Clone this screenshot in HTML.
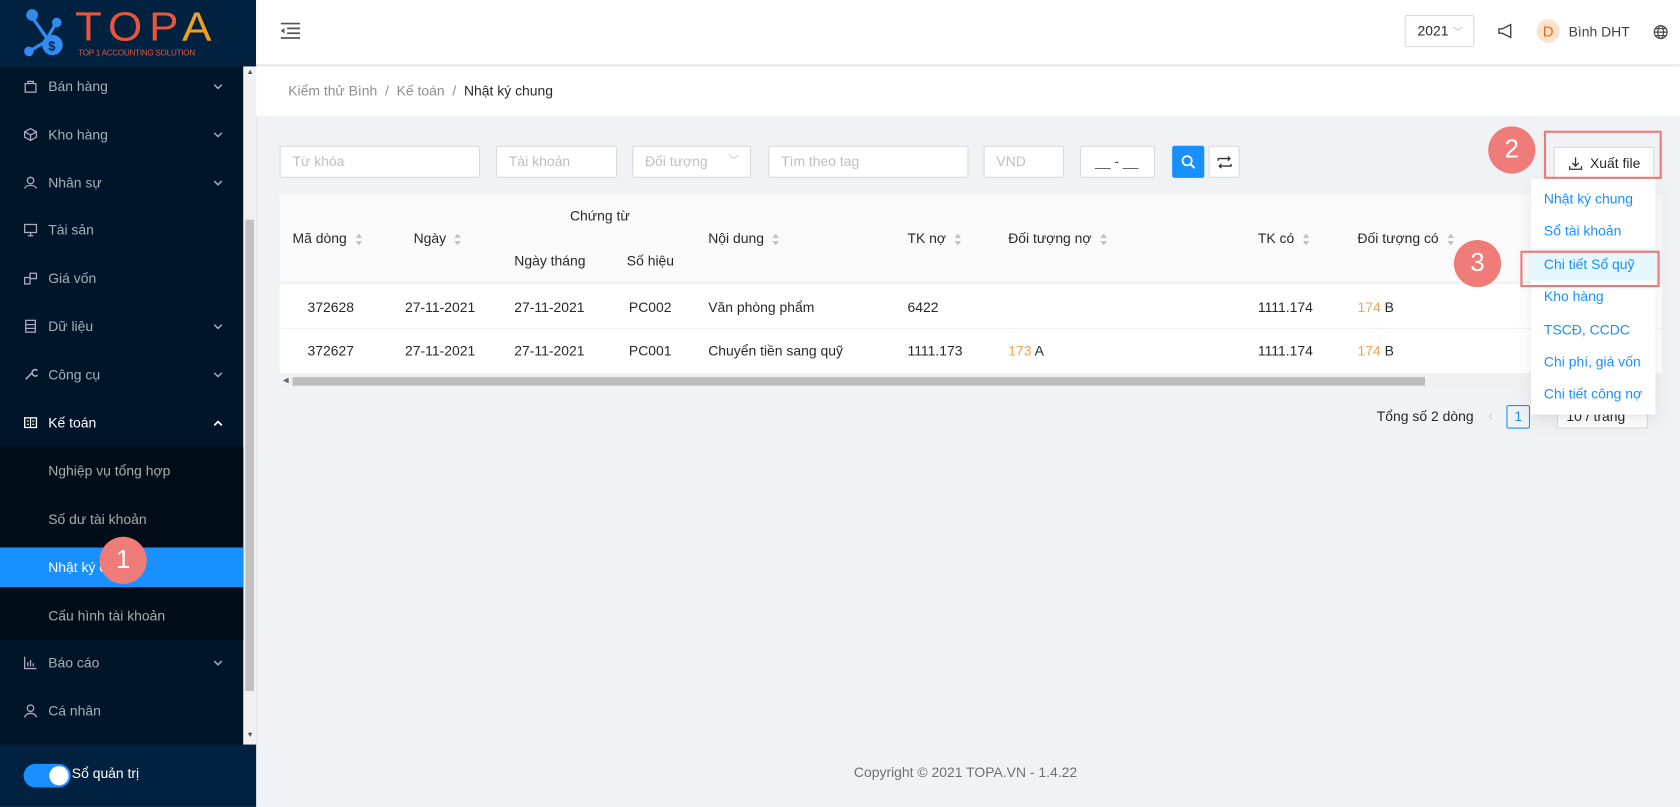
<!DOCTYPE html>
<html><head><meta charset="utf-8"><style>
*{box-sizing:border-box;margin:0;padding:0}
html,body{width:1680px;height:807px;overflow:hidden;background:#f0f2f5;font-family:"Liberation Sans",sans-serif}
#w{position:absolute;left:0;top:0;width:1568px;height:753px;transform:scale(1.07143);transform-origin:0 0;background:#f0f2f5;font-size:13px;color:rgba(0,0,0,.85)}
.a{position:absolute}
.side{left:0;top:0;width:239px;height:753px;background:#001529}
.logo{left:0;top:0;width:239px;height:62px;background:#002140}
.mi{position:absolute;left:0;width:227px;height:45px;line-height:45px;color:rgba(255,255,255,.65);font-size:13px}
.mi .t{position:absolute;left:45px}
.mi .ic{position:absolute;left:22px;top:16px;width:13px;height:13px}
.mi .cv{position:absolute;left:199px;top:20px;width:9px;height:6px}
.sub{left:0;top:417px;width:227px;height:180px;background:#000c17}
.inp{position:absolute;top:136px;height:30px;background:#fff;border:1px solid #d9d9d9;border-radius:2px;color:#bfbfbf;line-height:28px;padding-left:11px;font-size:13px}
.th{position:absolute;font-size:13px;color:rgba(0,0,0,.85)}
.sort{display:inline-block;margin-left:8px;vertical-align:middle;width:7px;height:11px;position:relative}
.sort:before{content:"";position:absolute;top:0;left:0;border:3.5px solid transparent;border-bottom:4px solid #bfbfbf;border-top:0}
.sort:after{content:"";position:absolute;bottom:0;left:0;border:3.5px solid transparent;border-top:4px solid #bfbfbf;border-bottom:0}
.td{position:absolute;font-size:13px;color:rgba(0,0,0,.85)}
.dd{position:absolute;left:12px;color:#1890ff;font-size:13px}
.circ{position:absolute;width:44px;height:44px;border-radius:50%;background:#ef7c79;color:#fff;font-size:24px;text-align:center;line-height:44px}
.org{color:#f0a35a}
</style></head><body><div id="w">
<div class="a side"></div>
<div class="a logo">
<svg class="a" style="left:22px;top:8px" width="48" height="48" viewBox="0 0 48 48"><g stroke="#2f8cf0" stroke-width="3" fill="#2f8cf0"><line x1="8" y1="8" x2="22" y2="28"/><line x1="30" y1="14" x2="22" y2="28"/><line x1="5" y1="40" x2="22" y2="30"/><circle cx="8" cy="6" r="4"/><circle cx="31" cy="13" r="3"/><circle cx="5" cy="40" r="3"/><circle cx="27" cy="34" r="8"/></g><text x="23" y="39" fill="#002140" font-size="12" font-weight="bold" font-family="Liberation Sans">$</text></svg>
<div class="a" style="left:70px;top:5px;font-size:38px;letter-spacing:6px;color:#e8553a;line-height:42px;transform:scaleX(1.08);transform-origin:0 0">TOP<span style="color:#f0a020">A</span></div>
<div class="a" style="left:73px;top:45px;font-size:7.5px;color:#e8553a;letter-spacing:-.2px">TOP 1 ACCOUNTING SOLUTION</div>
</div>
<div class="a" style="left:227px;top:62px;width:12px;height:633px;background:#f1f1f1"></div>
<div class="a" style="left:229px;top:205px;width:8px;height:440px;background:#c1c1c1"></div>
<div class="a" style="left:230px;top:64px;font-size:7px;color:#555">▲</div>
<div class="a" style="left:230px;top:683px;font-size:7px;color:#555">▼</div>
<div class="a sub"></div>
<div class="mi" style="top:58px"><svg class="ic" viewBox="0 0 13 13"><rect x="1.5" y="4" width="10" height="8" fill="none" stroke="#aab" stroke-width="1.2"/><path d="M4 4V2h5v2" fill="none" stroke="#aab" stroke-width="1.2"/></svg><span class="t">Bán hàng</span><svg class="cv" viewBox="0 0 9 6"><path d="M1 1l3.5 3.5L8 1" fill="none" stroke="#aab" stroke-width="1.4"/></svg></div>
<div class="mi" style="top:103px"><svg class="ic" viewBox="0 0 13 13"><path d="M6.5 1L12 4v5l-5.5 3L1 9V4z M1 4l5.5 3L12 4 M6.5 7v5" fill="none" stroke="#aab" stroke-width="1.2"/></svg><span class="t">Kho hàng</span><svg class="cv" viewBox="0 0 9 6"><path d="M1 1l3.5 3.5L8 1" fill="none" stroke="#aab" stroke-width="1.4"/></svg></div>
<div class="mi" style="top:148px"><svg class="ic" viewBox="0 0 13 13"><circle cx="6.5" cy="4.5" r="3" fill="none" stroke="#aab" stroke-width="1.2"/><path d="M1 12c1-4 10-4 11 0" fill="none" stroke="#aab" stroke-width="1.2"/></svg><span class="t">Nhân sự</span><svg class="cv" viewBox="0 0 9 6"><path d="M1 1l3.5 3.5L8 1" fill="none" stroke="#aab" stroke-width="1.4"/></svg></div>
<div class="mi" style="top:192px"><svg class="ic" viewBox="0 0 13 13"><rect x="1" y="1.5" width="11" height="7.5" fill="none" stroke="#aab" stroke-width="1.2"/><path d="M4 12h5M6.5 9v3" stroke="#aab" stroke-width="1.2"/></svg><span class="t">Tài sản</span></div>
<div class="mi" style="top:237px"><svg class="ic" viewBox="0 0 13 13"><path d="M1 6h5v6H1zM6 2h6v5H6z" fill="none" stroke="#aab" stroke-width="1.2"/></svg><span class="t">Giá vốn</span></div>
<div class="mi" style="top:282px"><svg class="ic" viewBox="0 0 13 13"><rect x="2" y="1" width="9" height="11" fill="none" stroke="#aab" stroke-width="1.2"/><path d="M2 5h9M2 8.5h9" stroke="#aab" stroke-width="1.2"/></svg><span class="t">Dữ liệu</span><svg class="cv" viewBox="0 0 9 6"><path d="M1 1l3.5 3.5L8 1" fill="none" stroke="#aab" stroke-width="1.4"/></svg></div>
<div class="mi" style="top:327px"><svg class="ic" viewBox="0 0 13 13"><path d="M2 11l6-6M8 5a3 3 0 1 0 0-.1" fill="none" stroke="#aab" stroke-width="1.5"/></svg><span class="t">Công cụ</span><svg class="cv" viewBox="0 0 9 6"><path d="M1 1l3.5 3.5L8 1" fill="none" stroke="#aab" stroke-width="1.4"/></svg></div>
<div class="mi" style="top:372px;color:#fff"><svg class="ic" viewBox="0 0 13 13"><rect x="1" y="2" width="11" height="9" fill="none" stroke="#fff" stroke-width="1.2"/><path d="M6.5 2v9M3 5h2M8 5h2M3 8h2M8 8h2" stroke="#fff" stroke-width="1"/></svg><span class="t">Kế toán</span><svg class="cv" viewBox="0 0 9 6"><path d="M1 5l3.5-3.5L8 5" fill="none" stroke="#fff" stroke-width="1.6"/></svg></div>
<div class="mi" style="top:417px"><span class="t">Nghiệp vụ tổng hợp</span></div>
<div class="mi" style="top:462px"><span class="t">Số dư tài khoản</span></div>
<div class="a" style="left:0;top:511px;width:227px;height:37px;background:#1890ff"></div>
<div class="mi" style="top:507px;color:#fff"><span class="t">Nhật ký chung</span></div>
<div class="mi" style="top:552px"><span class="t">Cấu hình tài khoản</span></div>
<div class="mi" style="top:596px"><svg class="ic" viewBox="0 0 13 13"><path d="M1 1v11h11M4 10V6M6.5 10V4M9 10V7" fill="none" stroke="#aab" stroke-width="1.2"/></svg><span class="t">Báo cáo</span><svg class="cv" viewBox="0 0 9 6"><path d="M1 1l3.5 3.5L8 1" fill="none" stroke="#aab" stroke-width="1.4"/></svg></div>
<div class="mi" style="top:641px"><svg class="ic" viewBox="0 0 13 13"><circle cx="6.5" cy="4" r="3" fill="none" stroke="#aab" stroke-width="1.2"/><path d="M1 12.5c1-5 10-5 11 0" fill="none" stroke="#aab" stroke-width="1.2"/></svg><span class="t">Cá nhân</span></div>
<div class="a" style="left:0;top:695px;width:239px;height:58px;background:#002140"></div>
<div class="a" style="left:22px;top:713px;width:44px;height:22px;border-radius:11px;background:#1890ff"><div class="a" style="left:24px;top:2px;width:18px;height:18px;border-radius:50%;background:#fff"></div></div>
<div class="a" style="left:67px;top:714px;color:#fff;font-size:13px">Sổ quản trị</div>
<div class="circ" style="left:93px;top:501px">1</div>

<div class="a" style="left:239px;top:0;width:1329px;height:60px;background:#fff;box-shadow:0 1px 4px rgba(0,21,41,.08)"></div>
<svg class="a" style="left:262px;top:21px" width="18" height="16" viewBox="0 0 18 16"><path d="M0 1h18M6 5.5h12M6 10h12M0 14.5h18" stroke="#555" stroke-width="1.6"/><path d="M0 7.75l3.5-2.5v5z" fill="#555"/></svg>
<div class="a" style="left:1311px;top:14px;width:65px;height:30px;border:1px solid #d9d9d9;border-radius:2px;line-height:28px;padding-left:11px;color:rgba(0,0,0,.85)">2021 <span style="color:#bbb;font-size:10px">﹀</span></div>
<svg class="a" style="left:1398px;top:22px" width="15" height="14" viewBox="0 0 15 14"><path d="M1 5v4h3l8 4V1L4 5z" fill="none" stroke="#444" stroke-width="1.3"/></svg>
<div class="a" style="left:1434px;top:18px;width:22px;height:22px;border-radius:50%;background:#fde3cf;color:#f56a00;text-align:center;line-height:22px;font-size:14px">D</div>
<div class="a" style="left:1464px;top:22px;font-size:13px;color:rgba(0,0,0,.75)">Bình DHT</div>
<svg class="a" style="left:1543px;top:23px" width="14" height="14" viewBox="0 0 14 14" fill="none" stroke="#444" stroke-width="1.1"><circle cx="7" cy="7" r="6"/><ellipse cx="7" cy="7" rx="2.6" ry="6"/><path d="M1 7h12M2 3.8h10M2 10.2h10"/></svg>

<div class="a" style="left:239px;top:62px;width:1329px;height:46px;background:#fff"></div>
<div class="a" style="left:269px;top:77px;color:rgba(0,0,0,.45)">Kiểm thử Bình &nbsp;/&nbsp; Kế toán &nbsp;/&nbsp; <span style="color:rgba(0,0,0,.85)">Nhật ký chung</span></div>

<div class="inp" style="left:261px;width:187px">Từ khóa</div>
<div class="inp" style="left:463px;width:113px">Tài khoản</div>
<div class="inp" style="left:590px;width:111px">Đối tượng <span style="position:absolute;right:10px;font-size:10px">﹀</span></div>
<div class="inp" style="left:717px;width:187px">Tìm theo tag</div>
<div class="inp" style="left:918px;width:75px">VND</div>
<div class="inp" style="left:1008px;width:70px;color:#555;padding-left:13px">__ - __</div>
<div class="a" style="left:1094px;top:136px;width:30px;height:30px;background:#1890ff;border-radius:2px"><svg style="position:absolute;left:8px;top:8px" width="14" height="14" viewBox="0 0 14 14"><circle cx="6" cy="6" r="4.3" fill="none" stroke="#fff" stroke-width="1.6"/><path d="M9 9l4 4" stroke="#fff" stroke-width="1.8"/></svg></div>
<div class="a" style="left:1128px;top:136px;width:29px;height:30px;background:#fff;border:1px solid #d9d9d9;border-radius:2px"><svg style="position:absolute;left:7px;top:8px" width="14" height="13" viewBox="0 0 14 13" fill="none" stroke="#333" stroke-width="1.2"><path d="M1 5V3h11M10 1l2 2-2 2M13 8v2H2M4 12l-2-2 2-2"/></svg></div>

<div class="a" style="left:1450px;top:137px;width:94px;height:30px;background:#fff;border:1px solid #d9d9d9;border-radius:2px"><svg style="position:absolute;left:13px;top:8px" width="13" height="13" viewBox="0 0 13 13" fill="none" stroke="#333" stroke-width="1.2"><path d="M6.5 1v8M3.5 6l3 3 3-3M1 9v3h11V9"/></svg><span style="position:absolute;left:33px;top:7px">Xuất file</span></div>
<div class="a" style="left:1441px;top:122px;width:110px;height:45px;border:2px solid #ec7a7a"></div>
<div class="circ" style="left:1389px;top:118px">2</div>

<div class="a" style="left:261px;top:181px;width:1290px;height:83px;background:#fafafa;border-bottom:1px solid #f0f0f0"></div>
<div class="th" style="left:273px;top:215px">Mã dòng<span class="sort"></span></div>
<div class="th" style="left:386px;top:215px">Ngày<span class="sort"></span></div>
<div class="th" style="left:532px;top:194px">Chứng từ</div>
<div class="th" style="left:480px;top:236px">Ngày tháng</div>
<div class="th" style="left:585px;top:236px">Số hiệu</div>
<div class="th" style="left:661px;top:215px">Nội dung<span class="sort"></span></div>
<div class="th" style="left:847px;top:215px">TK nợ<span class="sort"></span></div>
<div class="th" style="left:941px;top:215px">Đối tượng nợ<span class="sort"></span></div>
<div class="th" style="left:1174px;top:215px">TK có<span class="sort"></span></div>
<div class="th" style="left:1267px;top:215px">Đối tượng có<span class="sort"></span></div>
<div class="a" style="left:261px;top:265px;width:1290px;height:84px;background:#fff"></div>
<div class="a" style="left:261px;top:306px;width:1290px;height:1px;background:#f0f0f0"></div>
<div class="a" style="left:261px;top:348px;width:1290px;height:1px;background:#f0f0f0"></div>
<div class="td" style="left:287px;top:279px">372628</div><div class="td" style="left:378px;top:279px">27-11-2021</div><div class="td" style="left:480px;top:279px">27-11-2021</div><div class="td" style="left:587px;top:279px">PC002</div><div class="td" style="left:661px;top:279px">Văn phòng phẩm</div><div class="td" style="left:847px;top:279px">6422</div><div class="td" style="left:1174px;top:279px">1111.174</div><div class="td" style="left:1267px;top:279px"><span class="org">174</span> B</div>
<div class="td" style="left:287px;top:320px">372627</div><div class="td" style="left:378px;top:320px">27-11-2021</div><div class="td" style="left:480px;top:320px">27-11-2021</div><div class="td" style="left:587px;top:320px">PC001</div><div class="td" style="left:661px;top:320px">Chuyển tiền sang quỹ</div><div class="td" style="left:847px;top:320px">1111.173</div><div class="td" style="left:941px;top:320px"><span class="org">173</span> A</div><div class="td" style="left:1174px;top:320px">1111.174</div><div class="td" style="left:1267px;top:320px"><span class="org">174</span> B</div>
<div class="a" style="left:261px;top:350px;width:1290px;height:12px;background:#f1f1f1"></div>
<div class="a" style="left:273px;top:352px;width:1057px;height:8px;background:#bdbdbd"></div>
<div class="a" style="left:264px;top:351px;font-size:7px;color:#666">◀</div>

<div class="a" style="left:1285px;top:381px">Tổng số 2 dòng</div>
<div class="a" style="left:1389px;top:380px;color:#ccc">‹</div>
<div class="a" style="left:1406px;top:378px;width:22px;height:22px;border:1px solid #1890ff;border-radius:2px;color:#1890ff;text-align:center;line-height:20px">1</div>
<div class="a" style="left:1453px;top:378px;width:85px;height:22px;border:1px solid #d9d9d9;background:#fff;padding-left:8px;line-height:20px">10 / trang</div>

<div class="a" style="left:1429px;top:167px;width:116px;height:220px;background:#fff;box-shadow:0 3px 6px -4px rgba(0,0,0,.12),0 6px 16px rgba(0,0,0,.08)">
<div class="a" style="left:0;top:65px;width:116px;height:30px;background:#e6f7ff"></div>
<div class="dd" style="top:11px">Nhật ký chung</div>
<div class="dd" style="top:41px">Sổ tài khoản</div>
<div class="dd" style="top:72px">Chi tiết Sổ quỹ</div>
<div class="dd" style="top:102px">Kho hàng</div>
<div class="dd" style="top:133px">TSCĐ, CCDC</div>
<div class="dd" style="top:163px">Chi phí, giá vốn</div>
<div class="dd" style="top:193px">Chi tiết công nợ</div>
</div>
<div class="a" style="left:1419px;top:234px;width:130px;height:34px;border:2px solid #ec7a7a"></div>
<div class="circ" style="left:1357px;top:224px">3</div>

<div class="a" style="left:797px;top:713px;color:rgba(0,0,0,.55)">Copyright © 2021 TOPA.VN - 1.4.22</div>
</div></body></html>
